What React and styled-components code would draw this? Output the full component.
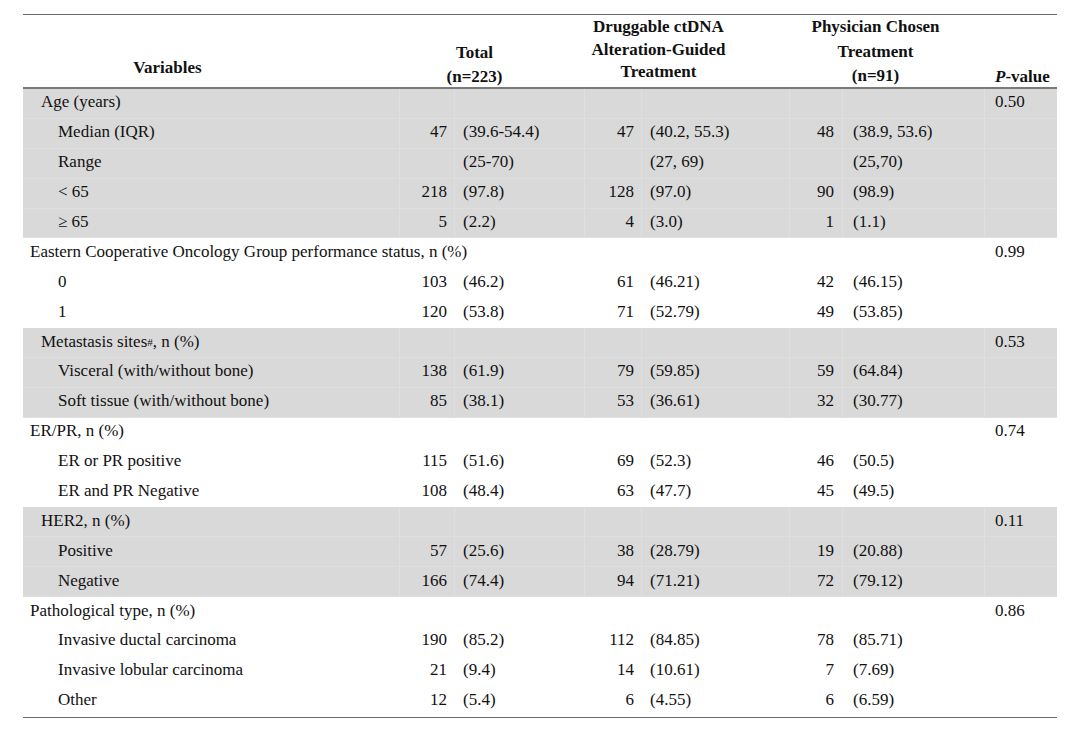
import styled, { createGlobalStyle } from "styled-components";

const GlobalStyle = createGlobalStyle`
  html, body {
    margin: 0;
    padding: 0;
    background: #fff;
  }
  body {
    font-family: "Liberation Serif", "Times New Roman", serif;
    color: #111;
  }
`;

// variables | total n | total % | ctDNA n | ctDNA % | physician n | physician % | p
const COLS = "377px 55px 130px 57px 148px 53px 142px 72px";

const Page = styled.div`
  padding: 14px 0 0 23px;
  width: 1034px;
`;

const Table = styled.div`
  width: 1034px;
  border-top: 1px solid #6a6a6a;
  border-bottom: 1.5px solid #6a6a6a;
  font-size: 17px;
`;

const HeadRow = styled.div`
  display: grid;
  grid-template-columns: ${COLS};
  height: 72px;
  border-bottom: 2px solid #7a7a7a;
`;

const HeadCell = styled.div`
  grid-column: ${(p) => p.span};
  align-self: end;
  padding-right: ${(p) => p.shift || 0}px;
  padding-left: ${(p) => p.left || 0}px;
  padding-bottom: ${(p) => p.bottom || 0}px;
  text-align: ${(p) => p.textAlign || "center"};
  font-weight: bold;
  white-space: nowrap;
  line-height: ${(p) => p.lh || 23}px;
`;

const Italic = styled.i`
  font-weight: bold;
`;

const Group = styled.div`
  background: ${(p) => (p.shaded ? "#d9d9d9" : "#fff")};
`;

const Row = styled.div`
  display: grid;
  grid-template-columns: ${COLS};
  height: 29.9px;
`;

const Cell = styled.div`
  display: flex;
  align-items: center;
  padding-bottom: 2px;
  white-space: nowrap;
  border-right: 1px solid ${(p) => (p.shaded ? "#dfdfdf" : "#fff")};
  border-bottom: 1px solid ${(p) => (p.shaded ? "#dfdfdf" : "#fff")};
  &:last-child {
    border-right: none;
  }
`;

const Label = styled(Cell)`
  padding-left: ${(p) => p.indent}px;
`;

const Count = styled(Cell)`
  justify-content: flex-end;
  padding-right: ${(p) => p.pad || 7}px;
`;

const Pct = styled(Cell)`
  padding-left: ${(p) => p.pad || 8}px;
`;

const PVal = styled(Cell)`
  padding-left: 10px;
`;

const Sup = styled.sup`
  font-size: 11px;
  line-height: 0;
  vertical-align: 6px;
`;

const groups = [
  {
    title: "Age (years)",
    p: "0.50",
    shaded: true,
    rows: [
      ["Median (IQR)", "47", "(39.6-54.4)", "47", "(40.2, 55.3)", "48", "(38.9, 53.6)"],
      ["Range", "", "(25-70)", "", "(27, 69)", "", "(25,70)"],
      ["< 65", "218", "(97.8)", "128", "(97.0)", "90", "(98.9)"],
      ["≥ 65", "5", "(2.2)", "4", "(3.0)", "1", "(1.1)"],
    ],
  },
  {
    title: "Eastern Cooperative Oncology Group performance status, n (%)",
    p: "0.99",
    rows: [
      ["0", "103", "(46.2)", "61", "(46.21)", "42", "(46.15)"],
      ["1", "120", "(53.8)", "71", "(52.79)", "49", "(53.85)"],
    ],
  },
  {
    title: (
      <>
        Metastasis sites<Sup>#</Sup>, n (%)
      </>
    ),
    p: "0.53",
    shaded: true,
    rows: [
      ["Visceral (with/without bone)", "138", "(61.9)", "79", "(59.85)", "59", "(64.84)"],
      ["Soft tissue (with/without bone)", "85", "(38.1)", "53", "(36.61)", "32", "(30.77)"],
    ],
  },
  {
    title: "ER/PR, n (%)",
    p: "0.74",
    rows: [
      ["ER or PR positive", "115", "(51.6)", "69", "(52.3)", "46", "(50.5)"],
      ["ER and PR Negative", "108", "(48.4)", "63", "(47.7)", "45", "(49.5)"],
    ],
  },
  {
    title: "HER2, n (%)",
    p: "0.11",
    shaded: true,
    rows: [
      ["Positive", "57", "(25.6)", "38", "(28.79)", "19", "(20.88)"],
      ["Negative", "166", "(74.4)", "94", "(71.21)", "72", "(79.12)"],
    ],
  },
  {
    title: "Pathological type, n (%)",
    p: "0.86",
    rows: [
      ["Invasive ductal carcinoma", "190", "(85.2)", "112", "(84.85)", "78", "(85.71)"],
      ["Invasive lobular carcinoma", "21", "(9.4)", "14", "(10.61)", "7", "(7.69)"],
      ["Other", "12", "(5.4)", "6", "(4.55)", "6", "(6.59)"],
    ],
  },
];

const DataRow = ({ r, shaded }) => (
  <Row>
    <Label indent={35} shaded={shaded}>{r[0]}</Label>
    <Count shaded={shaded}>{r[1]}</Count>
    <Pct shaded={shaded}>{r[2]}</Pct>
    <Count shaded={shaded}>{r[3]}</Count>
    <Pct shaded={shaded}>{r[4]}</Pct>
    <Count shaded={shaded} pad={8}>{r[5]}</Count>
    <Pct shaded={shaded} pad={10}>{r[6]}</Pct>
    <PVal shaded={shaded} />
  </Row>
);

const GroupBlock = ({ g }) => (
  <Group shaded={g.shaded}>
    <Row>
      <Label indent={g.shaded ? 18 : 7} shaded={g.shaded}>{g.title}</Label>
      <Count shaded={g.shaded} />
      <Pct shaded={g.shaded} />
      <Count shaded={g.shaded} />
      <Pct shaded={g.shaded} />
      <Count shaded={g.shaded} />
      <Pct shaded={g.shaded} />
      <PVal shaded={g.shaded}>{g.p}</PVal>
    </Row>
    {g.rows.map((r, i) => (
      <DataRow key={i} r={r} shaded={g.shaded} />
    ))}
  </Group>
);

export default function App() {
  return (
    <Page>
      <GlobalStyle />
      <Table>
        <HeadRow>
          <HeadCell span="1 / 2" shift={88} bottom={10}>
            Variables
          </HeadCell>
          <HeadCell span="2 / 4" shift={36} bottom={0} lh={24}>
            Total
            <br />
            (n=223)
          </HeadCell>
          <HeadCell span="4 / 6" shift={58} bottom={5} lh={22.5}>
            Druggable ctDNA
            <br />
            Alteration-Guided
            <br />
            Treatment
          </HeadCell>
          <HeadCell span="6 / 8" shift={24} bottom={0} lh={24.5}>
            Physician Chosen
            <br />
            Treatment
            <br />
            (n=91)
          </HeadCell>
          <HeadCell span="8 / 9" textAlign="left" left={10} bottom={0} lh={24}>
            <Italic>P</Italic>-value
          </HeadCell>
        </HeadRow>
        {groups.map((g, i) => (
          <GroupBlock key={i} g={g} />
        ))}
      </Table>
    </Page>
  );
}
